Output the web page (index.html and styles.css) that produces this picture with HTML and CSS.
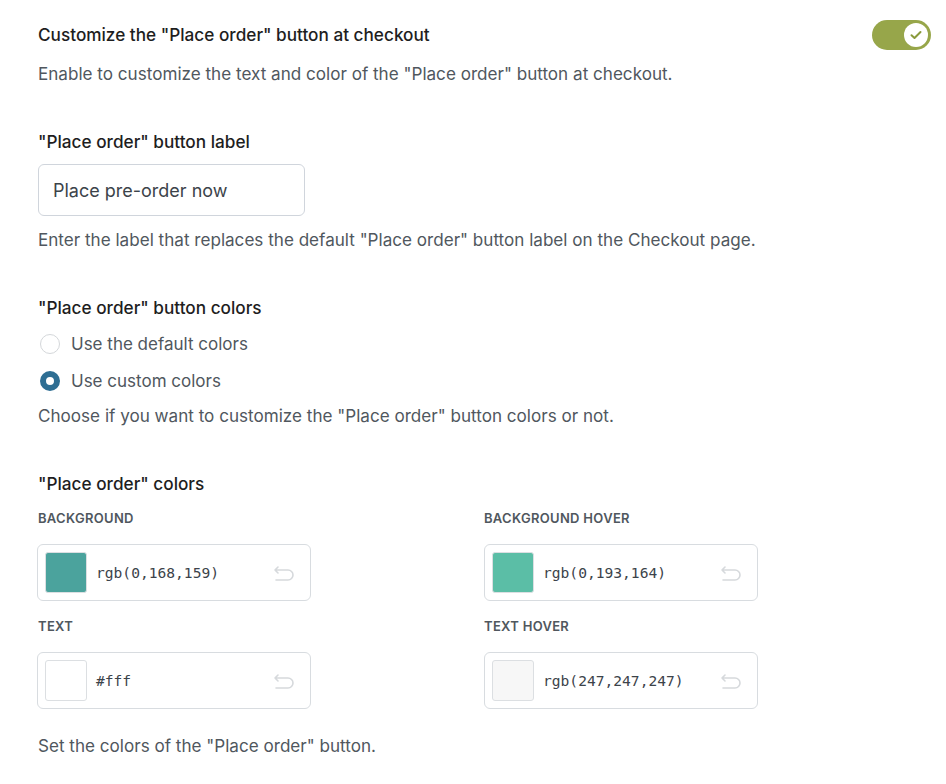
FILE: index.html
```html
<!DOCTYPE html>
<html lang="en">
<head>
    <meta charset="UTF-8">
    <meta name="viewport" content="width=device-width, initial-scale=1.0">
    <title>Place order button</title>
    <link rel="stylesheet" href="styles.css">
</head>
<body>

<div class="settings">
    <!-- Toggle -->
    <div class="field toggle-field">
        <div class="toggle-text">
            <h3 class="field-title">Customize the "Place order" button at checkout</h3>
            <p class="help">Enable to customize the text and color of the "Place order" button at checkout.</p>
        </div>
        <span class="toggle">
            <span class="knob">
                <svg width="12" height="10" viewBox="0 0 12 10"><path d="M1.5 5.2 4.5 8 10.5 2" fill="none" stroke="#8a9a3c" stroke-width="2" stroke-linecap="round" stroke-linejoin="round"/></svg>
            </span>
        </span>
    </div>

    <!-- Label -->
    <div class="field">
        <h3 class="field-title">"Place order" button label</h3>
        <input class="text-input" type="text" value="Place pre-order now">
        <p class="help">Enter the label that replaces the default "Place order" button label on the Checkout page.</p>
    </div>

    <!-- Radios -->
    <div class="field radio-field">
        <h3 class="field-title">"Place order" button colors</h3>
        <label class="radio"><span class="radio-dot"></span>Use the default colors</label>
        <label class="radio"><span class="radio-dot checked"></span>Use custom colors</label>
        <p class="help">Choose if you want to customize the "Place order" button colors or not.</p>
    </div>

    <!-- Colors -->
    <div class="field">
        <h3 class="field-title">"Place order" colors</h3>
        <div class="color-grid">
            <div class="color-item">
                <div class="color-label">Background</div>
                <div class="color-box">
                    <span class="swatch" style="background:#4ba39d"></span>
                    <span class="color-value">rgb(0,168,159)</span>
                    <svg class="reset" width="24" height="18" viewBox="0 0 24 18"><path d="M6 3 3 6l3 3M3 6h13a5 5 0 0 1 0 10H4" fill="none" stroke="#d6d9dc" stroke-width="1.6" stroke-linecap="round" stroke-linejoin="round"/></svg>
                </div>
            </div>
            <div class="color-item">
                <div class="color-label">Background hover</div>
                <div class="color-box">
                    <span class="swatch" style="background:#5bbea6"></span>
                    <span class="color-value">rgb(0,193,164)</span>
                    <svg class="reset" width="24" height="18" viewBox="0 0 24 18"><path d="M6 3 3 6l3 3M3 6h13a5 5 0 0 1 0 10H4" fill="none" stroke="#d6d9dc" stroke-width="1.6" stroke-linecap="round" stroke-linejoin="round"/></svg>
                </div>
            </div>
            <div class="color-item">
                <div class="color-label">Text</div>
                <div class="color-box">
                    <span class="swatch" style="background:#fff"></span>
                    <span class="color-value">#fff</span>
                    <svg class="reset" width="24" height="18" viewBox="0 0 24 18"><path d="M6 3 3 6l3 3M3 6h13a5 5 0 0 1 0 10H4" fill="none" stroke="#d6d9dc" stroke-width="1.6" stroke-linecap="round" stroke-linejoin="round"/></svg>
                </div>
            </div>
            <div class="color-item">
                <div class="color-label">Text hover</div>
                <div class="color-box">
                    <span class="swatch" style="background:#f7f7f7"></span>
                    <span class="color-value">rgb(247,247,247)</span>
                    <svg class="reset" width="24" height="18" viewBox="0 0 24 18"><path d="M6 3 3 6l3 3M3 6h13a5 5 0 0 1 0 10H4" fill="none" stroke="#d6d9dc" stroke-width="1.6" stroke-linecap="round" stroke-linejoin="round"/></svg>
                </div>
            </div>
        </div>
        <p class="help colors-help">Set the colors of the "Place order" button.</p>
    </div>
</div>

</body>
</html>
```

FILE: styles.css
```css
/* Global styling */
body {
    font-family: 'Inter', 'Noto Sans', sans-serif;
    background-color: #ffffff;
    color: #1e1e1e;
    margin: 0;
    padding: 0;
}

.settings {
    padding: 23px 15px 0 38px;
}

.field {
    margin-bottom: 44px;
}

.field-title {
    font-size: 17.2px;
    font-weight: 500;
    color: #1e1e1e;
    margin: 0 0 10px;
    line-height: 24px;
}

.help {
    font-size: 17.1px;
    color: #50575e;
    margin: 0;
    line-height: 24px;
}

/* Toggle row */
.toggle-field {
    display: flex;
    justify-content: space-between;
    align-items: flex-start;
    margin-bottom: 44px;
}

.toggle-field .field-title {
    margin-bottom: 15px;
}

.toggle {
    width: 59px;
    height: 30px;
    border-radius: 15px;
    background-color: #97a64a;
    display: flex;
    align-items: center;
    justify-content: flex-end;
    padding-right: 3px;
    box-sizing: border-box;
    margin-top: -3px;
}

.knob {
    width: 24px;
    height: 24px;
    border-radius: 50%;
    background-color: #ffffff;
    display: flex;
    align-items: center;
    justify-content: center;
}

/* Text input */
.text-input {
    display: block;
    width: 267px;
    height: 52px;
    box-sizing: border-box;
    margin: 0 0 12px 0;
    padding: 0 14px;
    font-family: inherit;
    font-size: 18px;
    color: #3c434a;
    border: 1px solid #d0d5dc;
    border-radius: 6px;
    outline: none;
}

/* Radios */
.radio-field .field-title {
    margin-bottom: 12px;
}

.radio {
    display: flex;
    align-items: center;
    font-size: 17px;
    color: #50575e;
    height: 24px;
    margin: 0 0 13px 2px;
}

.radio-dot {
    width: 20px;
    height: 20px;
    border-radius: 50%;
    border: 1px solid #d4d7da;
    box-sizing: border-box;
    margin-right: 11px;
    flex-shrink: 0;
}

.radio-dot.checked {
    border: 6px solid #2e6e93;
    background-color: #ffffff;
}

.radio + .radio {
    margin-bottom: 11px;
}

/* Color pickers */
.color-grid {
    display: grid;
    grid-template-columns: 447px 274px;
    row-gap: 17px;
    margin: 14px 0 0 -1px;
}

.color-label {
    font-size: 13px;
    font-weight: 600;
    letter-spacing: 0.3px;
    text-transform: uppercase;
    color: #50575e;
    line-height: 16px;
    margin: 0 0 18px 1px;
}

.color-item:nth-child(even) .color-label {
    margin-left: 0;
}

.color-box {
    display: flex;
    align-items: center;
    width: 274px;
    height: 57px;
    box-sizing: border-box;
    padding: 0 14px 0 7px;
    border: 1px solid #d8dce0;
    border-radius: 6px;
}

.swatch {
    width: 42px;
    height: 41px;
    border-radius: 3px;
    border: 1px solid #dcdfe2;
    box-sizing: border-box;
    flex-shrink: 0;
    margin-right: 9px;
}

.color-value {
    font-family: 'DejaVu Sans Mono', 'Liberation Mono', monospace;
    font-size: 14.6px;
    color: #3c434a;
    flex: 1;
}

.colors-help {
    margin-top: 25px;
}
```
